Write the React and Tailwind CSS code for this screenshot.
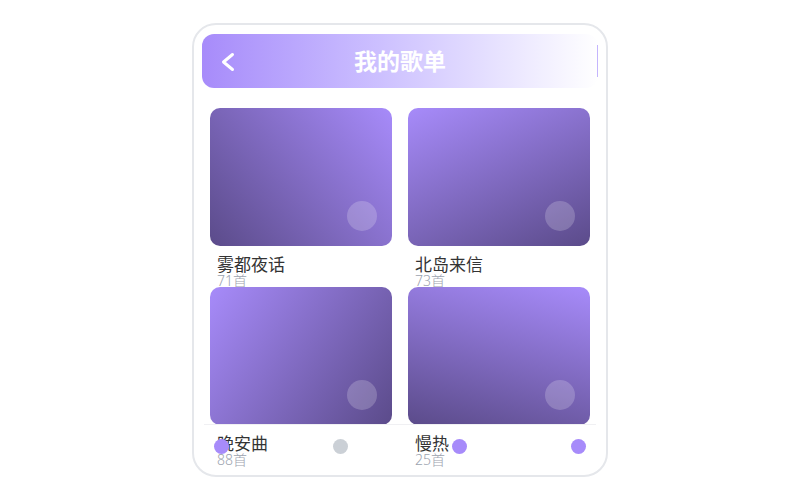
import React from "react";

const playlists = [
  { name: "雾都夜话", count: "71首", bg: "bg-[linear-gradient(230deg,#a78bfa,#5b4b8a)]" },
  { name: "北岛来信", count: "73首", bg: "bg-[linear-gradient(155deg,#a78bfa,#5b4b8a)]" },
  { name: "晚安曲", count: "88首", bg: "bg-[linear-gradient(125deg,#a78bfa,#5b4b8a)]" },
  { name: "慢热", count: "25首", bg: "bg-[linear-gradient(195deg,#a78bfa,#5b4b8a)]" },
];

export default function App() {
  return (
    <div
      className="w-[800px] h-[500px] bg-white flex justify-center pt-[23px]"
      style={{ fontFamily: '"Noto Sans", "Noto Sans CJK SC", sans-serif' }}
    >
      <div className="relative w-[416px] h-[454px] border-2 border-[#e5e7eb] rounded-[24px] overflow-hidden bg-white">
        <div className="relative mx-2 mt-[9px] h-[54px] rounded-xl bg-linear-to-r from-[#a78bfa] to-white flex items-center justify-center">
          <svg
            className="absolute left-[19px] top-[18px]"
            width="14"
            height="20"
            viewBox="0 0 14 20"
            fill="none"
            stroke="white"
            strokeWidth="3"
            strokeLinecap="round"
            strokeLinejoin="round"
          >
            <polyline points="11.5,2.5 2.5,10 11.5,17.5" />
          </svg>
          <span className="text-white font-bold text-[23px] leading-none">我的歌单</span>
          <div className="absolute right-0 top-[11px] bottom-[11px] w-[1.5px] bg-[#c4b5fd]" />
        </div>

        <div className="grid grid-cols-2 gap-x-4 gap-y-4 px-4 mt-5">
          {playlists.map((p) => (
            <div key={p.name} className="h-[163px]">
              <div className={`relative h-[138px] rounded-[10px] ${p.bg}`}>
                <div className="absolute right-[15px] bottom-[15px] w-[30px] h-[30px] rounded-full bg-white/20" />
              </div>
              <div className="pl-[7px] mt-[10px]">
                <div className="text-[17px] leading-[18px] text-[#333333]">{p.name}</div>
                <div className="text-[14px] leading-[14px] text-[#9ca3af] font-light">{p.count}</div>
              </div>
            </div>
          ))}
        </div>

        <div className="absolute left-[10px] right-[10px] bottom-0 h-[51px] border-t border-[#f0f0f3] flex items-start justify-between px-[10px] pt-[14px]">
          <span className="w-[15px] h-[15px] rounded-full bg-[#a78bfa]" />
          <span className="w-[15px] h-[15px] rounded-full bg-[#cbd0d6]" />
          <span className="w-[15px] h-[15px] rounded-full bg-[#a78bfa]" />
          <span className="w-[15px] h-[15px] rounded-full bg-[#a78bfa]" />
        </div>
      </div>
    </div>
  );
}
